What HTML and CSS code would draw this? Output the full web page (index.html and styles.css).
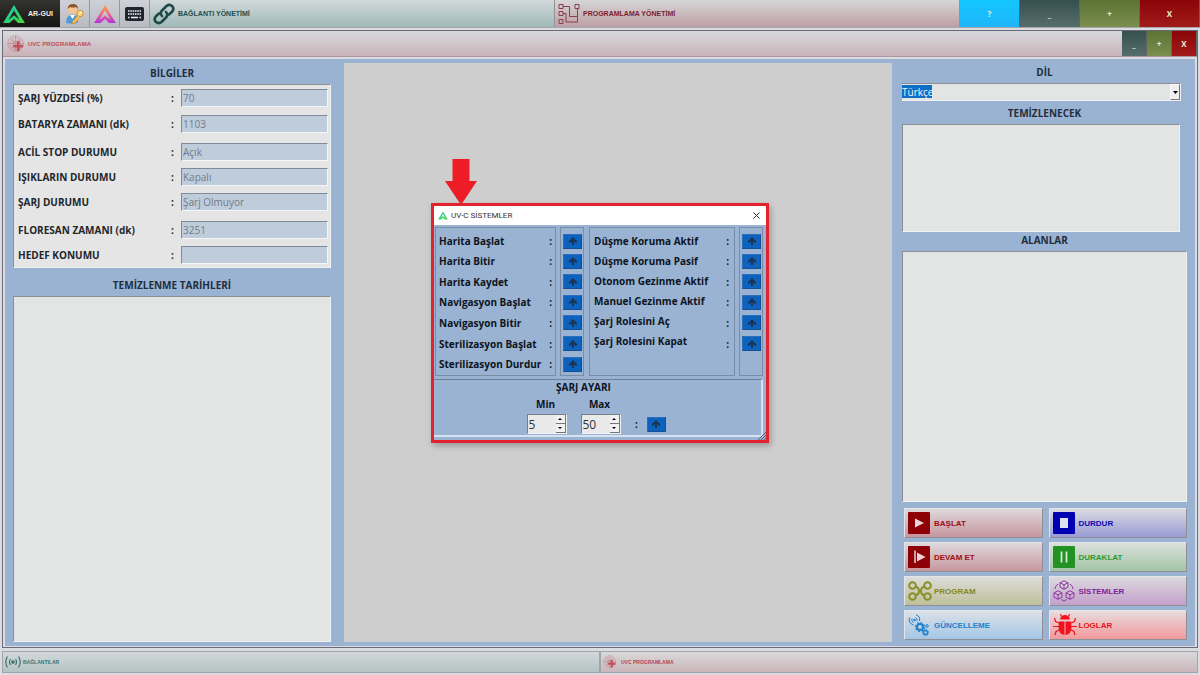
FILE: index.html
```html
<!DOCTYPE html>
<html lang="tr">
<head>
<meta charset="utf-8">
<title>AR-GUI</title>
<link rel="stylesheet" href="styles.css">
</head>
<body>
<svg class="defs" width="0" height="0" aria-hidden="true">
  <defs>
    <linearGradient id="gGreen" x1="0" y1="0" x2="1" y2="1"><stop offset="0" stop-color="#22c7d8"/><stop offset=".6" stop-color="#2fd06b"/><stop offset="1" stop-color="#57d33a"/></linearGradient>
    <linearGradient id="gPink" x1="0" y1="0" x2="0" y2="1"><stop offset="0" stop-color="#f7a63a"/><stop offset=".5" stop-color="#ee6c8c"/><stop offset="1" stop-color="#b02fe0"/></linearGradient>
    <symbol id="logo" viewBox="0 0 24 22"><path d="M12 1 24 21H16.500L12 16.500 7 21H0ZM12 7 6 17.500 12 12.500 18 17.500Z" fill-rule="evenodd"/></symbol>
    <symbol id="uvc" viewBox="0 0 20 20">
      <g fill="none" stroke="#b9707a" stroke-width=".8"><circle cx="9.500" cy="9.500" r="8.500" stroke-dasharray="2 1"/><circle cx="9.500" cy="9.500" r="6" stroke-dasharray="2 1"/><circle cx="9.500" cy="9.500" r="3"/><path d="M1 9.500H18M9.500 1V18M3.500 3.500 15.500 15.500M15.500 3.500 3.500 15.500" stroke-width=".5"/></g>
      <path d="M11 7h3v4h4v3h-4v4h-3v-4H7v-3h4Z" fill="#c0505a"/>
    </symbol>
    <symbol id="up" viewBox="0 0 10 10"><path d="M5 1 9.500 5.500 8 7 6 5.500V9H4V5.500L2 7 .5 5.500Z" fill="#1b3557"/></symbol>
    <symbol id="cube" viewBox="0 0 10 10"><path d="M5 .8 9 2.800V7.200L5 9.300 1 7.200V2.800ZM1 2.800 5 4.800 9 2.800M5 4.800V9.300" fill="none" stroke="#8d3ba0" stroke-width="1"/></symbol>
  </defs>
</svg>

<header class="topbar">
  <button class="brand"><svg width="22" height="20"><use href="#logo" fill="url(#gGreen)"/></svg>AR-GUI</button>
  <button class="tool" aria-label="Kullanıcı">
    <svg width="20" height="22" viewBox="0 0 20 22"><path d="M1 20q0-8 6-8.500 5 0 6 4v4q-4 2-12 .5Z" fill="#4c9ad6"/><path d="m5 12 2.500 4 2.500-4Z" fill="#fff"/><circle cx="7.500" cy="6.500" r="4.500" fill="#f3c392"/><path d="M2.500 6Q3 1 8 1q5 0 5 5l-2-2q-4 1-6 0Z" fill="#8a5527"/><circle cx="15" cy="10.500" r="3.200" fill="#fbd77e" stroke="#d58b27"/><circle cx="16" cy="9.500" r="1" fill="#fff"/><path d="m13 12.500-5.500 6v2l2.500-.5 5-5.500" fill="#f6c158" stroke="#d58b27" stroke-width=".7"/></svg>
  </button>
  <button class="tool" aria-label="Logo"><svg width="22" height="20"><use href="#logo" fill="url(#gPink)"/></svg></button>
  <button class="tool" aria-label="Klavye">
    <svg width="19" height="14" viewBox="0 0 19 14"><rect width="19" height="14" rx="2" fill="#20242e"/><path d="M3 4H16M3 7H16" stroke="#eceef2" stroke-width="1.600" stroke-dasharray="1.600 .7"/><path d="M3 10.500H4.500M6 10.500H13M14.500 10.500H16" stroke="#eceef2" stroke-width="1.600"/></svg>
  </button>
  <button class="tab teal">
    <svg width="22" height="22" viewBox="0 0 22 22" fill="none" stroke="#1d4a48" stroke-width="2.600" stroke-linecap="round"><path d="M9 13Q6.500 10 9 7.500L13.500 3Q16.500 .8 19.300 3.200 21.500 6 19 8.800L16 11.500"/><path d="M13 9Q15.500 12 13 14.500L8.500 19Q5.500 21.200 2.700 18.800 .5 16 3 13.200L6 10.500"/></svg>BAĞLANTI YÖNETİMİ
  </button>
  <button class="tab pink">
    <svg width="22" height="20" viewBox="0 0 22 20" fill="none" stroke="#8a3d4a" stroke-width="1"><path d="M1 .5h4v4H1ZM1 7.500h4v4H1ZM1 15.500h4v4H1ZM17 .5h4v4h-4Z"/><path d="M5 2.500h6.500v10h8v-8M5 9.500h3v8.500h11.500v-5.500"/></svg>PROGRAMLAMA YÖNETİMİ
  </button>
  <button class="win help">?</button><button class="win min">_</button><button class="win max">+</button><button class="win close">X</button>
</header>

<main class="window">
  <div class="titlebar">
    <h1><svg width="18" height="18"><use href="#uvc"/></svg>UVC PROGRAMLAMA</h1>
    <button class="win min">_</button><button class="win max">+</button><button class="win close">X</button>
  </div>
  <div class="content">
    <section class="left">
      <h2>BİLGİLER</h2>
      <div class="info">
        <label for="i1">ŞARJ YÜZDESİ (%)</label><span>:</span><input id="i1" value="70" disabled>
        <label for="i2">BATARYA ZAMANI (dk)</label><span>:</span><input id="i2" value="1103" disabled>
        <label for="i3">ACİL STOP DURUMU</label><span>:</span><input id="i3" value="Açık" disabled>
        <label for="i4">IŞIKLARIN DURUMU</label><span>:</span><input id="i4" value="Kapalı" disabled>
        <label for="i5">ŞARJ DURUMU</label><span>:</span><input id="i5" value="Şarj Olmuyor" disabled>
        <label for="i6">FLORESAN ZAMANI (dk)</label><span>:</span><input id="i6" value="3251" disabled>
        <label for="i7">HEDEF KONUMU</label><span>:</span><input id="i7" value="" disabled>
      </div>
      <h2 class="history">TEMİZLENME TARİHLERİ</h2>
      <div class="list grow"></div>
    </section>

    <section class="canvas"></section>

    <section class="right">
      <h2><label for="lang">DİL</label></h2>
      <div class="combo">
        <select id="lang"><option>Türkçe</option></select>
        <span class="drop"><svg width="5" height="3"><path d="M0 0h5L2.500 3Z"/></svg></span>
      </div>
      <h2 class="targets">TEMİZLENECEK</h2>
      <div class="list short"></div>
      <h2 class="areas">ALANLAR</h2>
      <div class="list grow"></div>
      <div class="actions">
        <button class="act red"><svg width="22" height="22"><rect width="22" height="22" rx="1" fill="#8c0006"/><path d="M7 6.500 16 11 7 15.500Z" fill="#ead5d8"/></svg>BAŞLAT</button>
        <button class="act blue"><svg width="22" height="22"><rect width="22" height="22" rx="1" fill="#0000b0"/><path d="M7 6h8v10H7Z" fill="#dfe0f0"/></svg>DURDUR</button>
        <button class="act red"><svg width="22" height="22"><rect width="22" height="22" rx="1" fill="#8c0006"/><path d="M7 4.500V17" stroke="#ead5d8" stroke-width="1.500"/><path d="M9 6.500 17.500 11 9 15.500Z" fill="#ead5d8"/></svg>DEVAM ET</button>
        <button class="act green"><svg width="22" height="22"><rect width="22" height="22" rx="1" fill="#229322"/><path d="M8.500 5.500V16.500M13.500 5.500V16.500" stroke="#d5ead5" stroke-width="1.800"/></svg>DURAKLAT</button>
        <button class="act olive"><svg width="24" height="20" viewBox="0 0 24 20" fill="none" stroke="#8b8f28" stroke-width="2"><circle cx="4.500" cy="4.500" r="3.300"/><circle cx="19.500" cy="4.500" r="3.300"/><circle cx="4.500" cy="15.500" r="3.300"/><circle cx="19.500" cy="15.500" r="3.300"/><path d="M7.500 5.500Q11 6.500 11 10T7.500 14.500M16.500 5.500Q13 6.500 13 10T16.500 14.500"/></svg>PROGRAM</button>
        <button class="act purple"><svg width="22" height="22"><use href="#cube" x="6" y="0" width="10" height="10"/><use href="#cube" x="0" y="10" width="10" height="10"/><use href="#cube" x="12" y="10" width="10" height="10"/><path d="M5 4Q2 6 2 9M17 4Q20 6 20 9M8 19.500l3 1.500 3-1.500" fill="none" stroke="#8d3ba0"/></svg>SİSTEMLER</button>
        <button class="act sky"><svg width="22" height="22" viewBox="0 0 22 22" fill="none" stroke="#1f7fcb"><circle cx="12" cy="13" r="3" stroke-width="2"/><circle cx="12" cy="13" r="4.500" stroke-width="1.300" stroke-dasharray="1.800 1.730"/><circle cx="17.500" cy="18.500" r="2" stroke-width="1.300"/><circle cx="17.500" cy="18.500" r="3" stroke-dasharray="1.200 1.150"/><circle cx="19" cy="12" r="1.300"/><circle cx="6.500" cy="6" r=".8" fill="#1f7fcb"/><path d="M4 4.500Q3 7 5.500 8.500M1.500 3.500Q0 9 5.500 11M7.500 3.500Q9.500 4.500 9 7M8 .8Q12.500 2.500 11.500 7"/></svg>GÜNCELLEME</button>
        <button class="act coral"><svg width="24" height="22" viewBox="0 0 24 22" fill="#f0121c" stroke="#f0121c"><path d="M7.500 5Q8 1.500 12 1.500T16.500 5Z"/><path d="M6 7.500h5.500V21Q5.500 20 5.500 13ZM18 7.500h-5.500V21q6-1 6-8Z" stroke="none"/><path d="M8.500 2.500 7.500 0M15.500 2.500 16.500 0M6 9 2.500 7.500 1.500 4M18 9l3.500-1.500 1-3.500M6 12.500H0M18 12.500h6M6 16l-3 1.500L2 21M18 16l3 1.500 1 3.500" fill="none" stroke-width="1.200"/></svg>LOGLAR</button>
      </div>
    </section>
  </div>
</main>

<footer class="taskbar">
  <button class="task teal"><svg width="16" height="12" viewBox="0 0 16 12" fill="none" stroke="#3f7470" stroke-width="1.200"><circle cx="8" cy="6" r="1.200" fill="#3f7470"/><path d="M5.500 3Q3.500 6 5.500 9M10.500 3Q12.500 6 10.500 9M2.500 .5Q-1 6 2.500 11.500M13.500 .5Q17 6 13.500 11.500"/></svg>BAĞLANTILAR</button>
  <button class="task pink"><svg width="14" height="14"><use href="#uvc"/></svg>UVC PROGRAMLAMA</button>
</footer>

<svg class="pointer" width="32" height="46" viewBox="0 0 32 46" aria-hidden="true"><path d="M7.500 0h17v22H32L16 46 0 22h7.500Z" fill="#ed1c27"/></svg>

<div class="dialog" role="dialog" aria-labelledby="dlgTitle">
  <div class="dialog-title">
    <svg width="10" height="9"><use href="#logo" fill="url(#gGreen)"/></svg><span id="dlgTitle">UV-C SİSTEMLER</span>
    <button aria-label="Kapat"><svg width="7" height="7" stroke="#333" fill="none"><path d="M.5 .5l6 6M6.500 .5l-6 6"/></svg></button>
  </div>
  <div class="commands">
    <div class="group first">
      <div class="steps"><label for="a1">Harita Başlat</label><label for="a2">Harita Bitir</label><label for="a3">Harita Kaydet</label><label for="a4">Navigasyon Başlat</label><label for="a5">Navigasyon Bitir</label><label for="a6">Sterilizasyon Başlat</label><label for="a7">Sterilizasyon Durdur</label></div>
      <div class="steps"><span>:</span><span>:</span><span>:</span><span>:</span><span>:</span><span>:</span><span>:</span></div>
    </div>
    <div class="group keys steps">
      <button id="a1" class="go"><svg width="10" height="10"><use href="#up"/></svg></button>
      <button id="a2" class="go"><svg width="10" height="10"><use href="#up"/></svg></button>
      <button id="a3" class="go"><svg width="10" height="10"><use href="#up"/></svg></button>
      <button id="a4" class="go"><svg width="10" height="10"><use href="#up"/></svg></button>
      <button id="a5" class="go"><svg width="10" height="10"><use href="#up"/></svg></button>
      <button id="a6" class="go"><svg width="10" height="10"><use href="#up"/></svg></button>
      <button id="a7" class="go"><svg width="10" height="10"><use href="#up"/></svg></button>
    </div>
    <div class="group second">
      <div class="steps even"><label for="b1">Düşme Koruma Aktif</label><label for="b2">Düşme Koruma Pasif</label><label for="b3">Otonom Gezinme Aktif</label><label for="b4">Manuel Gezinme Aktif</label><label for="b5">Şarj Rolesini Aç</label><label for="b6">Şarj Rolesini Kapat</label></div>
      <div class="steps"><span>:</span><span>:</span><span>:</span><span>:</span><span>:</span><span>:</span></div>
    </div>
    <div class="group keys steps">
      <button id="b1" class="go"><svg width="10" height="10"><use href="#up"/></svg></button>
      <button id="b2" class="go"><svg width="10" height="10"><use href="#up"/></svg></button>
      <button id="b3" class="go"><svg width="10" height="10"><use href="#up"/></svg></button>
      <button id="b4" class="go"><svg width="10" height="10"><use href="#up"/></svg></button>
      <button id="b5" class="go"><svg width="10" height="10"><use href="#up"/></svg></button>
      <button id="b6" class="go"><svg width="10" height="10"><use href="#up"/></svg></button>
    </div>
  </div>
  <div class="charge">
    <h3>ŞARJ AYARI</h3>
    <label class="lo" for="cmin">Min</label><label class="hi" for="cmax">Max</label>
    <div class="spin lo"><input id="cmin" value="5"><button aria-label="Min artır"><svg width="4" height="2"><path d="M0 2h4L2 0Z"/></svg></button><button aria-label="Min azalt"><svg width="4" height="2"><path d="M0 0h4L2 2Z"/></svg></button></div>
    <div class="spin hi"><input id="cmax" value="50"><button aria-label="Max artır"><svg width="4" height="2"><path d="M0 2h4L2 0Z"/></svg></button><button aria-label="Max azalt"><svg width="4" height="2"><path d="M0 0h4L2 2Z"/></svg></button></div>
    <span class="colon">:</span>
    <button class="go" aria-label="Şarj ayarını gönder"><svg width="10" height="10"><use href="#up"/></svg></button>
  </div>
  <svg class="grip" width="8" height="8" stroke="#4c5c70"><path d="M0 8 8 0M3 8l5-5M6 8l2-2"/></svg>
</div>
</body>
</html>
```
FILE: styles.css
```css
* { box-sizing: border-box; }

body {
  margin: 0;
  min-height: 100vh;
  display: flex;
  flex-direction: column;
  position: relative;
  background: #dadce1;
  color: #22262b;
  font-family: "Open Sans", "Noto Sans", sans-serif;
  font-size: 10px;
}

button, input, select { font: inherit; color: inherit; margin: 0; border-radius: 0; }
button { padding: 0; border: 0; background: none; display: flex; align-items: center; }
svg { display: block; flex: none; }
h1, h2, h3 { margin: 0; }
.defs { position: absolute; }

.topbar { display: flex; height: 28px; font: bold 7px "Liberation Sans", sans-serif; border-bottom: 1px solid #a5a7ab; }
.brand { width: 60px; padding-left: 3px; gap: 3px; background: linear-gradient(#33332f, #171613); color: #f0f0f0; }
.tool { width: 30px; justify-content: center; border-right: 1px solid #96989e; background: linear-gradient(#cfd1d8, #b9bbc1); }
.tab { flex: 1; gap: 3px; padding-left: 3px; border-right: 1px solid #8f9497; }
.tab.teal { background: linear-gradient(#d3d8da, #9fb9b8); color: #1f4f4d; }
.tab.pink { background: linear-gradient(#d6d6d7, #bd9fa4); color: #7b1f30; }

.win { justify-content: center; border-right: 1px solid #5f6466; color: #e8eed6; font: bold 8px "Open Sans", sans-serif; }
.topbar .win { width: 60px; }
.titlebar .win { width: 25px; }
.help { background: linear-gradient(#13c6ff, #1fb6fa); }
.min { background: linear-gradient(#36504f, #566d6c); }
.max { background: linear-gradient(#5b7335, #7b8f4e); }
.close { background: linear-gradient(#8a0507, #a11b1b); }

.window { flex: 1; display: flex; flex-direction: column; margin: 2px 2px 0; border: 1px solid #6a6a74; }
.titlebar { display: flex; height: 26px; border-bottom: 1px solid #a9989c; background: linear-gradient(#d8d9dd, #c9b3b8); }
.titlebar h1 { flex: 1; display: flex; align-items: center; gap: 3px; padding-left: 4px; color: #bf4a57; font: bold 6px "Liberation Sans", sans-serif; }

.content { flex: 1; display: flex; margin: 2px 2px 1px; padding: 4px 8px 4px; background: #9ab3d3; }
h2 { text-align: center; font-size: 10px; line-height: 14px; font-weight: bold; color: #1f2e3d; }
.left { width: 318px; display: flex; flex-direction: column; padding-top: 3px; }
.left h2 { height: 18px; }
.left .history { height: 28px; padding-top: 10px; }
.canvas { flex: 1; margin: 0 10px 0 13px; background: #cdcecd; }
.right { width: 285px; display: flex; flex-direction: column; padding-top: 2px; }
.right h2 { height: 18px; }
.right .targets { height: 23px; padding-top: 5px; }
.right .areas { height: 19px; padding-top: 1px; }

.info {
  display: grid;
  grid-template-columns: 150px 17px 147px;
  grid-template-columns: 1fr 17px 147px;
  grid-template-rows: 26px 26px 30px 20px 30px 26px 24px;
  align-items: center;
  padding: 0 2px 0 4px;
  border: 1px solid #8b8f94;
  border-right-color: #eff1f2;
  border-bottom-color: #eff1f2;
  background: #e5e5e5;
  font-weight: bold;
}
.info span { text-align: center; }
.info input {
  width: 100%;
  height: 18px;
  padding: 0 1px;
  border: 1px solid #7f8b98;
  border-right-color: #f4f6f8;
  border-bottom-color: #f4f6f8;
  background: #bfccdb;
  color: #707c89;
  font-weight: normal;
}

.list { border: 1px solid #8b8f94; border-right-color: #f0f2f2; border-bottom-color: #f0f2f2; background: #e3e5e4; }
.grow { flex: 1; }
.short { height: 108px; margin-right: 7px; }

.combo { position: relative; margin-right: 6px; }
.combo select {
  display: block;
  width: 100%;
  height: 18px;
  padding: 0;
  appearance: none;
  border: 1px solid #8b8f94;
  border-left: 0;
  border-right-color: #f0f2f2;
  border-bottom-color: #f0f2f2;
  background: linear-gradient(#0f6fc6, #0f6fc6) 0 1px / 30px 13px no-repeat #e3e5e4;
  color: #f2f6fa;
}
.drop { position: absolute; top: 1px; right: 1px; bottom: 1px; width: 10px; display: grid; place-items: center; pointer-events: none; background: #efefef; border: 1px solid #f8f8f8; border-right-color: #777; border-bottom-color: #777; }

.actions { display: grid; grid-template-columns: 1fr 1fr; gap: 4px 6px; padding: 6px 0 2px 2px; }
.act { height: 30px; gap: 4px; padding-left: 3px; border: 1px solid #e3e5e8; border-right-color: #8f8f98; border-bottom-color: #8f8f98; font: bold 8px "Liberation Sans", sans-serif; }
.act.red { color: #a00b14; background: linear-gradient(#ddd9dc, #c7969d); }
.act.blue { color: #0b0bb5; background: linear-gradient(#dadbe2, #9a9bd4); }
.act.green { color: #2c9a32; background: linear-gradient(#dbe0dc, #a3c5a6); }
.act.olive { color: #858a20; background: linear-gradient(#dcdcda, #bfc09a); }
.act.purple { color: #7f1f96; background: linear-gradient(#dddade, #c3a0cb); }
.act.sky { color: #1f7fcb; background: linear-gradient(#dbe1e6, #a3c7e6); }
.act.coral { color: #e8141d; background: linear-gradient(#e8dcdd, #f2999c); }
.act.olive, .act.coral { gap: 2px; }

.taskbar { display: flex; margin: 3px 2px 2px; font: bold 5px "Liberation Sans", sans-serif; }
.task { flex: 1; height: 22px; gap: 2px; padding-left: 2px; border: 1px solid #a2a6aa; }
.task.teal { color: #3f7470; background: linear-gradient(#d4d8da, #b4c3c3); }
.task.pink { color: #b24552; background: linear-gradient(#d9d8da, #cbb6bb); gap: 4px; }

.pointer { position: absolute; top: 159px; left: calc(50% - 155px); }

.dialog {
  position: absolute;
  top: 203px;
  left: 50%;
  width: 338px;
  margin-left: -169px;
  border: 3px solid #e2222f;
  background: #9ab3d3;
  color: #0d1320;
  font-weight: bold;
  box-shadow: 2px 3px 6px #9a9a9a;
}
.dialog-title { display: flex; align-items: center; gap: 3px; height: 19px; padding: 0 6px 0 4px; background: #fff; color: #333; font: normal 8px Roboto, sans-serif; }
.dialog-title button { margin-left: auto; }

.commands { display: flex; height: 151px; padding: 2px 3px 0 1px; }
.group { display: flex; justify-content: space-between; padding: 3px; border: 1px solid #7a8ca6; }
.first { width: 121px; margin-right: 4px; }
.second { flex: 1; margin: 0 4px 0 5px; padding: 3px 5px 3px 4px; }
.keys { width: 24px; padding: 3px 2px; }
.steps { display: grid; grid-template-rows: 20px 20px 21px 20px 21px 21px 20px; align-items: center; align-content: start; justify-content: start; }
.even { grid-template-rows: repeat(6, 20px); }
.go { width: 19px; height: 15px; justify-content: center; background: #0d62bd; border: 1px solid #2b6fbc; border-right-color: #174f92; border-bottom-color: #174f92; }

.charge {
  display: grid;
  grid-template-columns: 54px 46px 20px 20px;
  grid-template-rows: 14px 20px 20px;
  align-items: center;
  justify-content: center;
  margin: 3px 3px 3px 0;
  padding: 0 2px 1px 0;
  border-top: 1px solid #6f8098;
  border-right: 2px solid #d5e2f2;
  border-bottom: 2px solid #d5e2f2;
}
.charge h3 { grid-column: 1 / 5; padding-right: 26px; text-align: center; font-size: 10px; line-height: 14px; }
.charge label { width: 38px; text-align: center; }
.lo { grid-column: 1; }
.hi { grid-column: 2; }
.colon { text-align: center; }
.spin {
  display: grid;
  grid-template: 1fr 1fr / 1fr 10px;
  width: 40px;
  height: 20px;
  border: 1px solid #777f88;
  border-right-color: #eef2f6;
  border-bottom-color: #eef2f6;
  background: #e9e9e9;
}
.spin input { grid-row: 1 / 3; width: 100%; min-width: 0; padding: 0 1px; border: 0; background: none; font-size: 12px; font-weight: normal; color: #333; }
.spin button { justify-content: center; background: #f1f1f1; border-right: 1px solid #777; border-bottom: 1px solid #777; }
.grip { position: absolute; right: 0; bottom: 0; }
```
